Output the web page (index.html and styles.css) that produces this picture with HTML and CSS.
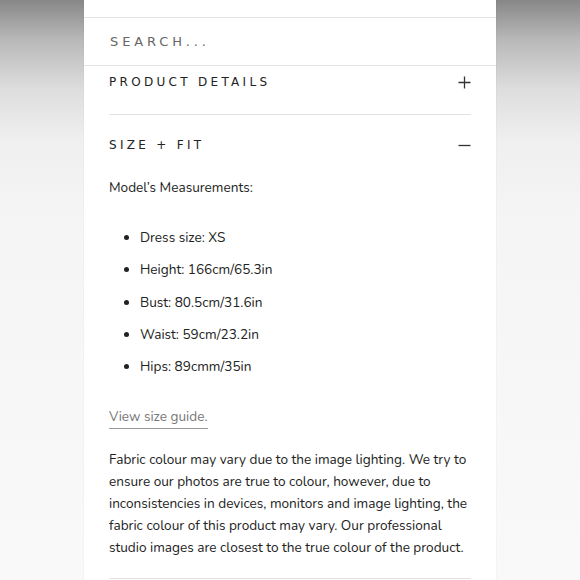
FILE: index.html
```html
<!DOCTYPE html>
<html lang="en">
<head>
    <meta charset="utf-8"/>
    <meta name="viewport" content="width=device-width, initial-scale=1"/>
    <title>Size + Fit</title>
    <link rel="stylesheet" href="styles.css">
</head>
<body>
    <div class="panel">
        <div class="topbar"></div>
        <div class="search">SEARCH...</div>

        <!-- Accordion -->
        <div class="accordion">
            <div class="item first">
                <div class="head">
                    <span>PRODUCT DETAILS</span>
                    <svg width="13" height="13" viewBox="0 0 13 13"><path d="M6.5 0.5V12.5M0.5 6.5H12.5" stroke="#333" stroke-width="1.3" fill="none"/></svg>
                </div>
            </div>
            <div class="item open">
                <div class="head">
                    <span>SIZE + FIT</span>
                    <svg width="13" height="13" viewBox="0 0 13 13"><path d="M0.5 6.5H12.5" stroke="#333" stroke-width="1.3" fill="none"/></svg>
                </div>
                <div class="body">
                    <p>Model’s Measurements:</p>
                    <ul>
                        <li>Dress size: XS</li>
                        <li>Height: 166cm/65.3in</li>
                        <li>Bust: 80.5cm/31.6in</li>
                        <li>Waist: 59cm/23.2in</li>
                        <li>Hips: 89cmm/35in</li>
                    </ul>
                    <a class="guide" href="#">View size guide.</a>
                    <p class="note">Fabric colour may vary due to the image lighting. We try to ensure our photos are true to colour, however, due to inconsistencies in devices, monitors and image lighting, the fabric colour of this product may vary. Our professional studio images are closest to the true colour of the product.</p>
                </div>
            </div>
        </div>
    </div>
</body>
</html>
```
FILE: styles.css
```css
html, body {
    height: 100%;
    margin: 0;
    padding: 0;
}
body {
    display: flex;
    justify-content: center;
    overflow: hidden;
    background: linear-gradient(#878787 0px, #b9b9b9 40px, #dedede 90px, #efefef 140px, #f5f5f5 220px, #f9f9f9 580px);
    font-family: "Nunito", Lato, "Open Sans", sans-serif;
    color: #222;
}
.panel {
    width: 412px;
    background: #fff;
    box-shadow: 0 0 1px rgba(0,0,0,0.12);
}
.topbar {
    height: 17px;
    border-bottom: 1px solid #e4e4e4;
}
.search {
    height: 47px;
    padding-left: 26px;
    display: flex;
    align-items: center;
    border-bottom: 1px solid #e4e4e4;
    font-family: "DejaVu Sans", sans-serif;
    font-size: 13px;
    letter-spacing: 3.9px;
    color: #666;
}
.accordion {
    padding: 0 25px;
}
.item {
    border-bottom: 1px solid #e2e2e2;
}
.item.first {
    padding: 0 0 16px;
}
.item.open {
    padding: 14px 0 19px;
}
.head {
    height: 32px;
    display: flex;
    align-items: center;
    justify-content: space-between;
    font-family: "DejaVu Sans", sans-serif;
    font-size: 12px;
    letter-spacing: 3.3px;
    color: #222;
}
.body {
    font-size: 13.6px;
    line-height: 22px;
}
.body p {
    margin: 16px 0 0;
}
.body ul {
    margin: 23px 0 0;
    padding-left: 31px;
}
.body li {
    padding: 5.15px 0;
}
.guide {
    display: inline-block;
    margin-top: 23px;
    line-height: 22px;
    color: #777;
    text-decoration: none;
    border-bottom: 1px solid #9a9a9a;
}
.body p.note {
    margin-top: 20px;
}
```
